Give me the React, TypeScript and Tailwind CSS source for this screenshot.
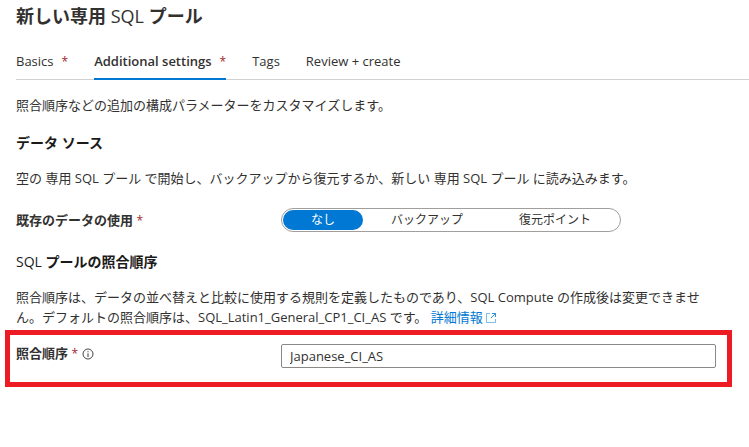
import React from "react";

const tabs = [
  { label: "Basics", required: true, active: false },
  { label: "Additional settings", required: true, active: true },
  { label: "Tags", required: false, active: false },
  { label: "Review + create", required: false, active: false },
];

const choices = [
  { id: "none", label: "なし", width: "w-20" },
  { id: "backup", label: "バックアップ", width: "w-32" },
  { id: "restore", label: "復元ポイント", width: "w-32" },
];

function Required() {
  return <span className="text-xs leading-5 font-normal text-[#a4262c]">*</span>;
}

function ExternalLinkIcon() {
  return (
    <svg viewBox="0 0 12 12" className="ml-0.5 inline size-3 align-[-2px]" fill="none" stroke="currentColor" aria-hidden="true">
      <path d="M5 1.5H1.5v9h9V7" opacity="0.5" />
      <path d="M7 1.5h3.5V5M10.5 1.5L6 6" opacity="0.8" />
    </svg>
  );
}

function InfoIcon() {
  return (
    <svg viewBox="0 0 12 12" className="size-3" fill="none" stroke="#323130" aria-hidden="true">
      <circle cx="6" cy="6" r="5" strokeWidth="0.9" />
      <path d="M6 5.5V9M6 3.2v1.1" />
    </svg>
  );
}

export default function App() {
  const [source, setSource] = React.useState("none");
  const [collation, setCollation] = React.useState("Japanese_CI_AS");

  return (
    <main className="bg-white pt-1 font-['Open_Sans','Noto_Sans_CJK_JP',sans-serif] text-[13px] leading-5 text-[#323130]">
      <div className="pl-4">
        <h1 className="text-lg leading-6 font-bold">
          新しい専用 <span className="font-medium">SQL</span> プール
        </h1>

        <nav className="mt-5 flex gap-[26px] border-b border-[#d2d0ce]">
          {tabs.map((tab) => (
            <button
              key={tab.label}
              type="button"
              aria-current={tab.active ? "step" : undefined}
              className={
                tab.active
                  ? "-mb-px flex items-baseline gap-2 border-b-2 border-[#0078d4] pt-[3px] pb-1.5 font-semibold"
                  : "-mb-px flex items-baseline gap-2 border-b-2 border-transparent pt-[3px] pb-1.5"
              }
            >
              {tab.label}
              {tab.required && <Required />}
            </button>
          ))}
        </nav>

        <p className="mt-[15px]">照合順序などの追加の構成パラメーターをカスタマイズします。</p>

        <h2 className="mt-[18px] text-sm leading-5 font-bold text-[#1b1a19]">データ ソース</h2>
        <p className="mt-[15px]">
          空の 専用 SQL プール で開始し、バックアップから復元するか、新しい 専用 SQL プール に読み込みます。
        </p>

        <fieldset className="mt-5 flex items-center">
          <legend className="float-left w-[265px] shrink-0 font-bold">
            既存のデータの使用 <Required />
          </legend>
          <div className="flex h-6 rounded-full border border-[#a19f9d] p-px text-xs">
            {choices.map((choice) => (
              <label
                key={choice.id}
                className={
                  (source === choice.id
                    ? "flex cursor-pointer items-center justify-center rounded-full bg-[#0078d4] text-white "
                    : "flex cursor-pointer items-center justify-center rounded-full ") + choice.width
                }
              >
                <input
                  type="radio"
                  name="source"
                  value={choice.id}
                  checked={source === choice.id}
                  onChange={() => setSource(choice.id)}
                  className="sr-only"
                />
                {choice.label}
              </label>
            ))}
          </div>
        </fieldset>

        <h2 className="mt-5 text-sm leading-5 font-bold text-[#1b1a19]">
          <span className="font-medium">SQL</span> プールの照合順序
        </h2>
        <p className="mt-[15px] mr-11">
          照合順序は、データの並べ替えと比較に使用する規則を定義したものであり、SQL Compute の作成後は変更できません。デフォルトの照合順序は、SQL_Latin1_General_CP1_CI_AS です。{" "}
          <a href="#details" className="text-[#0078d4]">
            詳細情報
            <ExternalLinkIcon />
          </a>
        </p>
      </div>

      <div className="mt-[3px] mr-[17px] ml-[5px] flex h-[57px] items-start border-[5px] border-[#ed1c24] pt-2 pr-[11px] pl-1.5">
        <div className="flex w-[265px] shrink-0 items-center gap-1">
          <label htmlFor="collation" className="font-bold">
            照合順序 <Required />
          </label>
          <InfoIcon />
        </div>
        <input
          id="collation"
          value={collation}
          onChange={(event) => setCollation(event.target.value)}
          className="mt-px h-6 min-w-0 flex-1 rounded-xs border border-[#8a8886] px-2"
        />
      </div>
    </main>
  );
}
